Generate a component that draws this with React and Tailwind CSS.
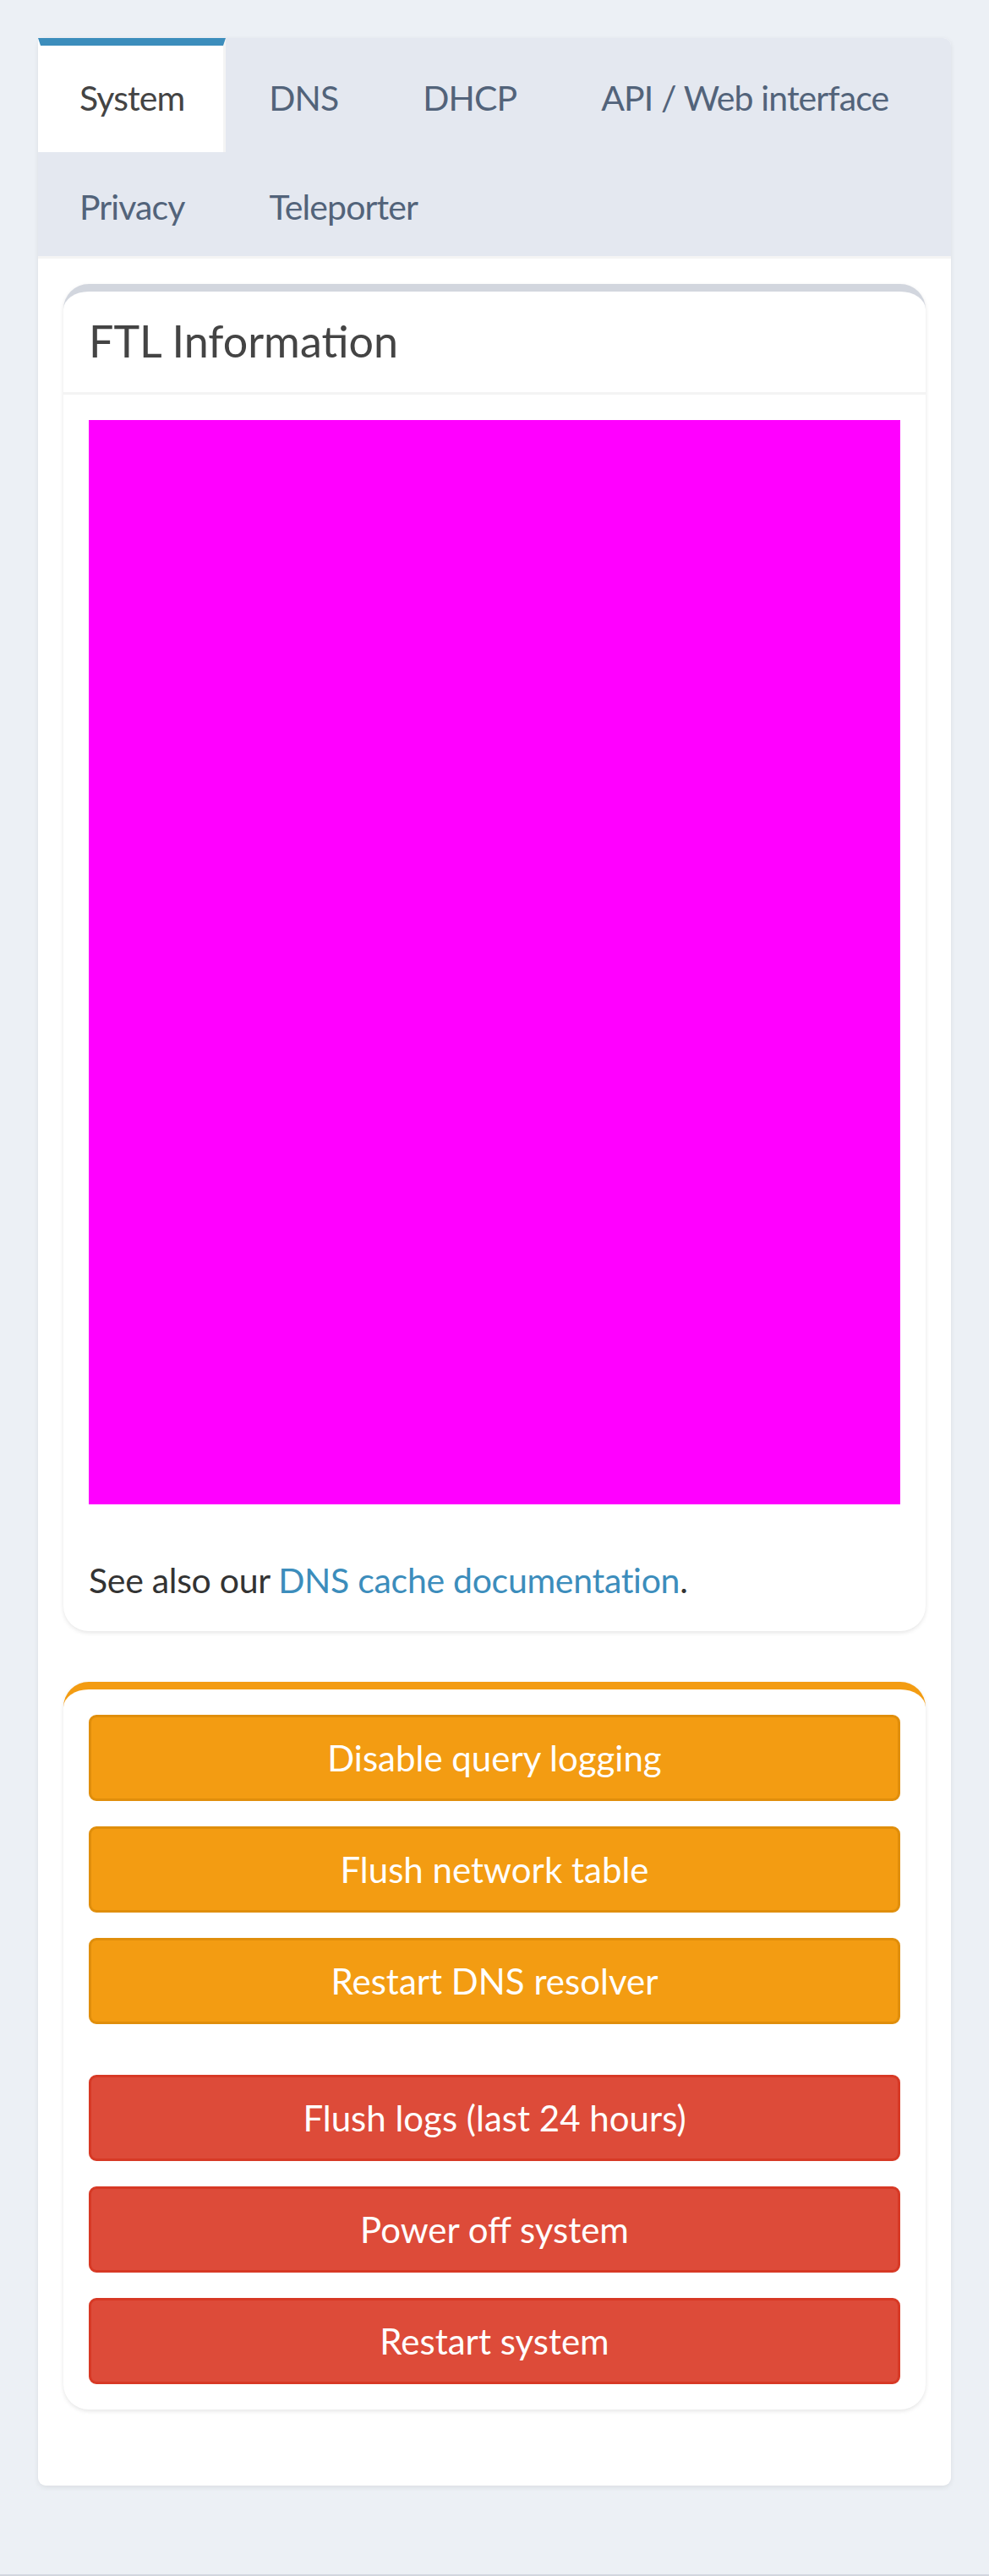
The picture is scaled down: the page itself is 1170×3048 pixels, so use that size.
import React from "react";

const tabs = [
  { label: "System", active: true },
  { label: "DNS" },
  { label: "DHCP" },
  { label: "API / Web interface" },
  { label: "Privacy" },
  { label: "Teleporter" },
];

function TabBar() {
  return (
    <ul className="flex flex-wrap rounded-t-[9px] bg-[#e4e8f0] border-b-[3px] border-[#f4f4f4]">
      {tabs.map((tab) => (
        <li key={tab.label} className="mb-[-6px] mr-[2px]">
          <a
            href="#"
            className={
              tab.active
                ? "block h-[135px] border-t-[9px] border-x-[3px] border-t-[#3c8dbc] border-l-transparent border-r-[#f4f4f4] bg-white px-[46px] pt-[32px] text-[41px] leading-[60px] tracking-[-0.9px] text-[#444]"
                : "block h-[135px] border-t-[9px] border-x-[3px] border-transparent px-[46px] pt-[32px] text-[41px] leading-[60px] tracking-[-0.9px] text-[#52637a]"
            }
          >
            {tab.label}
          </a>
        </li>
      ))}
    </ul>
  );
}

function ActionButton({ label, danger }) {
  return (
    <button
      type="button"
      className={
        danger
          ? "block h-[102px] w-full rounded-[9px] border-[3px] border-[#d73925] bg-[#dd4b39] text-center text-[42px] leading-[60px] text-white"
          : "block h-[102px] w-full rounded-[9px] border-[3px] border-[#e08e0b] bg-[#f39c12] text-center text-[42px] leading-[60px] text-white"
      }
    >
      {label}
    </button>
  );
}

export default function App() {
  return (
    <div className="min-h-[3048px] bg-[#ecf0f5] px-[45px] pt-[45px] font-['Lato',sans-serif]">
      <div className="rounded-[9px] bg-white shadow-[0_2px_6px_rgba(0,0,0,0.08)]">
        <TabBar />

        <div className="p-[30px]">
          {/* FTL info card */}
          <div className="rounded-[30px] border-t-[9px] border-[#d2d6de] bg-white shadow-[0_2px_5px_rgba(0,0,0,0.1)]">
            <div className="border-b-[3px] border-[#f4f4f4] px-[30px] pb-[31px] pt-[28px]">
              <h3 className="text-[52px] leading-[60px] text-[#444]">FTL Information</h3>
            </div>
            <div className="p-[30px]">
              <div className="h-[1283px] bg-[#ff00ff]" />
              <p className="mt-[60px] text-[41px] leading-[60px] tracking-[-0.3px] text-[#333]">
                See also our{" "}
                <a href="#" className="text-[#3c8dbc]">
                  DNS cache documentation
                </a>
                .
              </p>
            </div>
          </div>

          {/* actions card */}
          <div className="mb-[60px] mt-[60px] rounded-[30px] border-t-[9px] border-[#f39c12] bg-white shadow-[0_2px_5px_rgba(0,0,0,0.1)]">
            <div className="flex flex-col gap-[30px] p-[30px]">
              <ActionButton label="Disable query logging" />
              <ActionButton label="Flush network table" />
              <ActionButton label="Restart DNS resolver" />
              <div className="mt-[30px] flex flex-col gap-[30px]">
                <ActionButton label="Flush logs (last 24 hours)" danger />
                <ActionButton label="Power off system" danger />
                <ActionButton label="Restart system" danger />
              </div>
            </div>
          </div>
        </div>
      </div>
      <div className="mx-[-45px] mt-[105px] h-[3px] border-t-[3px] border-[#d2d6de]" />
    </div>
  );
}
